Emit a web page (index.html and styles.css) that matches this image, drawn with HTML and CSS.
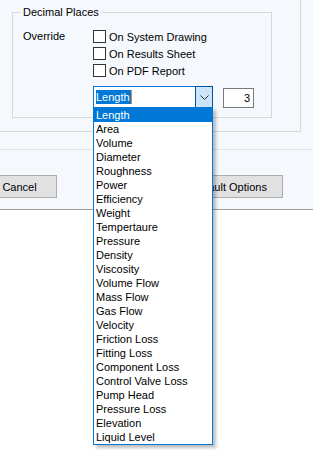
FILE: index.html
```html
<!DOCTYPE html>
<html>
<head>
    <title>Options</title>
    <link rel="stylesheet" href="styles.css">
</head>
<body>
    <div class="window">
        <div class="settings-panel">
            <div class="group">
                <div class="group-title">Decimal Places</div>
                <div class="group-body">
                    <div class="label">Override</div>
                    <div class="options">
                        <label class="option"><span class="check"></span>On System Drawing</label>
                        <label class="option"><span class="check"></span>On Results Sheet</label>
                        <label class="option"><span class="check"></span>On PDF Report</label>

                        <div class="combo-row">
                            <div class="combo">
                                <div class="combo-text"><span class="selected">Length</span></div>
                                <div class="combo-button">
                                    <svg width="9" height="5" viewBox="0 0 9 5">
                                        <path d="M0.5 0.5 L4.5 4.5 L8.5 0.5" fill="none" stroke="#333" stroke-width="1"/>
                                    </svg>
                                </div>
                                <ul class="combo-list">
                                    <li class="active">Length</li>
                                    <li>Area</li>
                                    <li>Volume</li>
                                    <li>Diameter</li>
                                    <li>Roughness</li>
                                    <li>Power</li>
                                    <li>Efficiency</li>
                                    <li>Weight</li>
                                    <li>Tempertaure</li>
                                    <li>Pressure</li>
                                    <li>Density</li>
                                    <li>Viscosity</li>
                                    <li>Volume Flow</li>
                                    <li>Mass Flow</li>
                                    <li>Gas Flow</li>
                                    <li>Velocity</li>
                                    <li>Friction Loss</li>
                                    <li>Fitting Loss</li>
                                    <li>Component Loss</li>
                                    <li>Control Valve Loss</li>
                                    <li>Pump Head</li>
                                    <li>Pressure Loss</li>
                                    <li>Elevation</li>
                                    <li>Liquid Level</li>
                                </ul>
                            </div>
                            <div class="number-box">3</div>
                        </div>
                    </div>
                </div>
            </div>
        </div>

        <div class="separator"></div>

        <div class="button-bar">
            <button class="btn cancel">Cancel</button>
            <button class="btn defaults">Default Options</button>
        </div>

        <div class="blank"></div>
    </div>
</body>
</html>
```

FILE: styles.css
```css
body {
    margin: 0;
    background-color: #ffffff;
    font-family: "Liberation Sans", Arial, sans-serif;
    font-size: 11px;
    color: #000;
}

.window {
    width: 313px;
    background-color: #f5f9fd;
}

.settings-panel {
    box-sizing: border-box;
    width: 301px;
    height: 132px;
    padding-top: 12px;
    border-right: 1px solid #d9d9d9;
    border-bottom: 1px solid #d9d9d9;
}

.group {
    position: relative;
    margin-left: 12px;
    width: 260px;
    height: 106px;
    box-sizing: border-box;
    border: 1px solid #d9d9d9;
}

/* title sits on top of the group border */
.group-title {
    position: absolute;
    top: -8px;
    left: 8px;
    padding: 0 2px;
    line-height: 14px;
    background-color: #f5f9fd;
}

.group-body {
    display: grid;
    grid-template-columns: 70px auto;
    padding: 15px 0 0 10px;
}

.label {
    line-height: 17px;
}

.options {
    display: flex;
    flex-direction: column;
}

.option {
    display: flex;
    align-items: center;
    height: 17px;
}

.check {
    width: 13px;
    height: 13px;
    box-sizing: border-box;
    border: 1px solid #333333;
    background-color: #ffffff;
    margin-right: 3px;
}

.combo-row {
    display: flex;
    align-items: flex-end;
    margin-top: 7px;
}

.combo {
    position: relative;
    display: flex;
    width: 120px;
    height: 22px;
    box-sizing: border-box;
    border: 1px solid #0078d7;
    background-color: #ffffff;
}

.combo-text {
    flex: 1;
    display: flex;
    align-items: center;
    padding-left: 2px;
}

.selected {
    background-color: #0078d7;
    color: #ffffff;
    line-height: 14px;
    padding-right: 1px;
    border-right: 1px solid #e08a3c;
}

.combo-button {
    width: 16px;
    margin: -1px -1px -1px 0;
    border: 1px solid #005499;
    background-color: #cce4f7;
    display: flex;
    align-items: center;
    justify-content: center;
}

.combo-list {
    position: absolute;
    top: 20px;
    left: -1px;
    width: 120px;
    box-sizing: border-box;
    margin: 0;
    padding: 0;
    list-style: none;
    background-color: #ffffff;
    border: 1px solid #0078d7;
    box-shadow: 3px 3px 3px rgba(0, 0, 0, 0.25);
    z-index: 2;
}

.combo-list li {
    height: 14px;
    line-height: 14px;
    padding-left: 2px;
}

.combo-list li.active {
    background-color: #0078d7;
    color: #ffffff;
}

.number-box {
    width: 31px;
    height: 20px;
    box-sizing: border-box;
    margin-left: 10px;
    border: 1px solid #7a7a7a;
    background-color: #ffffff;
    text-align: right;
    padding-right: 3px;
    line-height: 18px;
}

.separator {
    height: 17px;
    border-bottom: 1px solid #e3e3e3;
}

.button-bar {
    display: flex;
    justify-content: space-between;
    height: 60px;
    box-sizing: border-box;
    padding: 25px 30px 0 0;
    border-bottom: 1px solid #a0a0a0;
}

.btn {
    height: 23px;
    border: 1px solid #adadad;
    background-color: #e1e1e1;
    font-family: "Liberation Sans", Arial, sans-serif;
    font-size: 11px;
    color: #000;
    padding: 0;
}

.cancel {
    width: 75px;
    margin-left: -18px;
}

.defaults {
    width: 108px;
}

.blank {
    height: 256px;
    background-color: #ffffff;
}
```
